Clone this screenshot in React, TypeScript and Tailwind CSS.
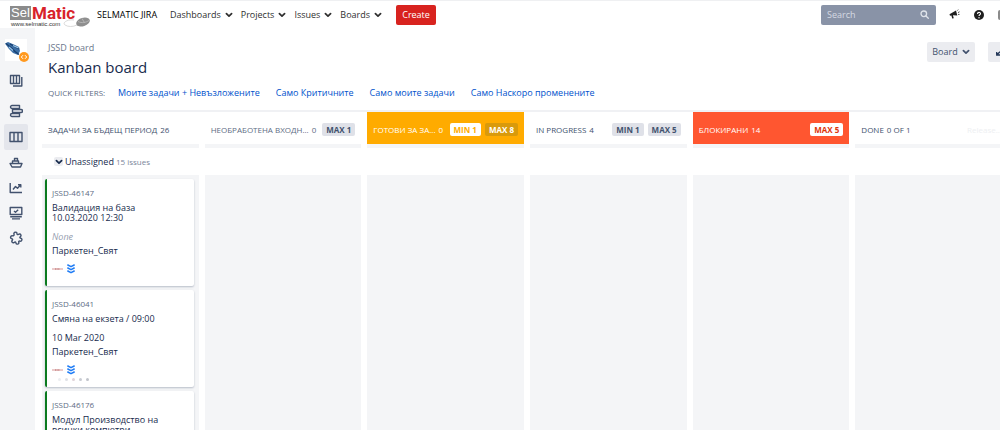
import React from "react";

function Chevron({ className = "" }: { className?: string }) {
  return (
    <svg className={"h-2 w-2 shrink-0 " + className} viewBox="0 0 8 8" fill="none" stroke="currentColor" strokeWidth="1.7" strokeLinecap="round" strokeLinejoin="round" aria-hidden="true">
      <path d="M1.4 2.6 4 5.2 6.6 2.6" />
    </svg>
  );
}

function Logo() {
  return (
    <span className="flex items-end pt-1">
      <span className="flex flex-col">
        <span className="flex h-[14px] items-center">
          <span className="flex h-[14px] w-[21px] items-center justify-center bg-[#8b8b8b] font-['Liberation_Sans',sans-serif] text-[13px] leading-[14px] text-white">Sel</span>
          <span className="ml-px font-['Roboto',sans-serif] text-[17px] leading-[14px] font-bold text-[#d8232a]">Matic</span>
        </span>
        <span className="pl-px font-['Liberation_Sans',sans-serif] text-[6px] leading-[8px] text-[#333]">www.selmatic.com</span>
      </span>
      <svg className="-ml-3 h-3 w-7 shrink-0" viewBox="0 0 28 12" aria-hidden="true">
        <path d="M11 4C4 3-1 7 2 9s8 2 12 0" fill="none" stroke="#cfcfcf" strokeWidth="0.8" />
        <ellipse cx="20" cy="6" rx="7" ry="4.2" transform="rotate(-18 20 6)" fill="#8f8f8f" />
        <path d="M15 5.5c4 2 8 1 11-1M19 2.5l2.4 4" fill="none" stroke="#bdbdbd" strokeWidth="0.8" />
      </svg>
    </span>
  );
}

const menus = ["Dashboards", "Projects", "Issues", "Boards"];

function TopBar() {
  return (
    <header className="flex h-7 shrink-0 items-center border-t border-[#eff0f2] pl-[10px] text-[#2f2f2f]">
      <a href="#home" className="flex w-[87px] shrink-0" aria-label="SelMatic home">
        <Logo />
      </a>
      <span className="w-[60px] text-[9px] font-medium whitespace-nowrap text-black">SELMATIC JIRA</span>
      <nav className="ml-[13px] flex items-center gap-2">
        {menus.map((m) => (
          <button key={m} className="flex items-center gap-1 text-[9px]">
            {m}
            <Chevron />
          </button>
        ))}
      </nav>
      <button className="ml-[14px] h-5 w-10 rounded-[2px] bg-[#d8231f] text-[9px] text-white">Create</button>
      <label className="ml-auto flex h-5 w-[115px] items-center rounded-[2px] bg-[#8993a7] pr-[7px] pl-[6px] text-[#dfe3ea]">
        <input type="search" placeholder="Search" aria-label="Search" className="w-full min-w-0 bg-transparent text-[9px] outline-none placeholder:text-[#d5dae3]" />
        <svg className="h-[9px] w-[9px] shrink-0" viewBox="0 0 9 9" fill="none" stroke="currentColor" strokeWidth="1.3" strokeLinecap="round" aria-hidden="true">
          <circle cx="3.8" cy="3.8" r="2.8" />
          <path d="m6 6 2.3 2.3" />
        </svg>
      </label>
      <button className="ml-[13px]" aria-label="Feedback">
        <svg className="h-[11px] w-[11px]" viewBox="0 0 11 11" fill="#1f1f1f" aria-hidden="true">
          <path d="M.5 5.2 7 1.6l1.3 4.8-4.4-.1.9 2.9-1.6.4-.8-3.2-1.4.3z" />
          <path d="M8.3 1.6 9.2.6M9 3.6l1.5-.8M9 5.4h1.5" stroke="#1f1f1f" strokeWidth="0.8" />
        </svg>
      </button>
      <button className="ml-[14px]" aria-label="Help">
        <svg className="h-[10px] w-[10px]" viewBox="0 0 10 10" aria-hidden="true">
          <circle cx="5" cy="5" r="5" fill="#1f1f1f" />
          <path d="M3.5 3.9c0-2 3-2 3-.2C6.5 4.9 5 4.7 5 6" fill="none" stroke="#fff" strokeWidth="1.1" />
          <circle cx="5" cy="7.7" r=".7" fill="#fff" />
        </svg>
      </button>
      <span className="ml-[14px] h-[10px] w-[2px] shrink-0 rounded-l-full bg-[#8b8b8b]" />
    </header>
  );
}

const railIcons = [
  {
    label: "Boards",
    box: "h-[25px]",
    d: <path d="M1.5 2.5h9v8h-9zM4.5 2.5v8M7.5 2.5v8M12.8 4v9H4" />,
  },
  {
    label: "Backlog",
    box: "mt-[6px] h-[25px]",
    d: <path d="M3 1.5h7.5v3H3a1.5 1.5 0 0 1 0-3zM3.5 5.500h8.5a1.500 1.500 0 0 1 0 3H3.500zM3 9.500h7.500v3H3a1.500 1.500 0 0 1 0-3z" />,
  },
  {
    label: "Kanban board",
    box: "mt-px h-[26px] bg-[#e4e6ec]",
    d: <path d="M1 2.500h12v9H1zM5 2.500v9M9 2.500v9" />,
  },
  {
    label: "Releases",
    box: "h-[25px]",
    d: <path d="M5.500 5V2.500h3V5M3.500 7.500V5h6v2.500M1 7.500h12l-1.500 3.500H3z" />,
  },
  {
    label: "Reports",
    box: "h-[25px]",
    d: <path d="M1.200 2v9.500H13M4 8.500l2.500-3 2 1.800L11.500 4M9 3.700h2.800v2.800" />,
  },
  {
    label: "Issues",
    box: "h-[25px]",
    d: <path d="M1.200 1.500h11.600v7H1.200zM5 5l1.500 1.300L9.200 3.800M1.200 10.700h11.600M3 12.900h8" />,
  },
  {
    label: "Components",
    box: "h-[26px]",
    d: <path d="M5 3.200c-.8-2.300 3-2.900 3-.5 0 1 .8 1.200 1.500.6 2-1.300 3.300 1.300 1.800 2.400-.8.700-.4 1.300.5 1.500 2 .7 1 3.400-.8 2.900-1-.3-1.500.3-1.200 1.200.5 2.200-2.600 2.400-2.900.5-.2-.9-.9-1-1.600-.4-1.700 1.200-3.200-.8-2-2.200.6-.7.300-1.300-.6-1.500-1.900-.6-1.200-3.200.7-2.900 1.100.2 1.900-.5 1.600-1.600z" />,
  },
];

function Rail() {
  return (
    <aside className="flex w-[35px] shrink-0 flex-col items-center bg-[#f4f5f7] pt-[11px] pr-[3px]">
      <a href="#project" className="relative block h-[22px] w-[22px] bg-white" aria-label="Project">
        <svg className="h-[22px] w-[22px]" viewBox="0 0 22 22" aria-hidden="true">
          <path d="M0 4.500 3 3l7 3 4 2 1 4-2 4-5-2-4-4z" fill="#3b6ea5" />
          <path d="M1 4.500l6 5 3 3 4 3M5 5l9 5" stroke="#173f70" strokeWidth="1.300" fill="none" />
          <path d="M8 6.500l5.500 2.500M4 8l4 3.500" stroke="#9cc8ea" strokeWidth="1.100" fill="none" />
        </svg>
        <svg className="absolute -right-[2px] -bottom-[1px] h-[10px] w-[10px]" viewBox="0 0 10 10" aria-hidden="true">
          <circle cx="5" cy="5" r="5" fill="#ff991f" />
          <path d="M4 3.200 2.300 5 4 6.800M6 3.200 7.700 5 6 6.800" fill="none" stroke="#fff" strokeWidth="1" />
        </svg>
      </a>
      <nav className="flex flex-col items-center pt-[6px]">
        {railIcons.map((i) => (
          <a key={i.label} href="#nav" aria-label={i.label} className={"flex w-6 items-center justify-center rounded-[2px] text-[#42526e] " + i.box}>
            <svg className="h-[14px] w-[14px]" viewBox="0 0 14 14" fill="none" stroke="currentColor" strokeWidth="1.4" strokeLinejoin="round" aria-hidden="true">
              {i.d}
            </svg>
          </a>
        ))}
      </nav>
    </aside>
  );
}

const filters = ["Моите задачи + Невъзложените", "Само Критичните", "Само моите задачи", "Само Наскоро променените"];

type Column = { name: string; count: string; head: string; badges: { text: string; style: string }[]; release?: boolean };

const grey = "bg-[#dfe1e8] text-[#42526e]";
const columns: Column[] = [
  { name: "ЗАДАЧИ ЗА БЪДЕЩ ПЕРИОД", count: "26", head: "text-[#42526e]", badges: [] },
  { name: "НЕОБРАБОТЕНА ВХОДН...", count: "0", head: "text-[#5e6c84]", badges: [{ text: "MAX 1", style: grey }] },
  {
    name: "ГОТОВИ ЗА ЗА...",
    count: "0",
    head: "bg-[#ffab00] text-white",
    badges: [
      { text: "MIN 1", style: "bg-white text-[#ffab00]" },
      { text: "MAX 8", style: "bg-[#d99a0b] text-white" },
    ],
  },
  { name: "IN PROGRESS", count: "4", head: "text-[#42526e]", badges: [{ text: "MIN 1", style: grey }, { text: "MAX 5", style: grey }] },
  { name: "БЛОКИРАНИ", count: "14", head: "bg-[#ff5630] text-white", badges: [{ text: "MAX 5", style: "bg-white text-[#de350b]" }] },
  { name: "DONE", count: "0 OF 1", head: "text-[#42526e]", badges: [], release: true },
];

function ColumnHead({ c }: { c: Column }) {
  return (
    <div className="min-w-0 border-b-4 border-[#f4f5f7]">
      <div className={"flex h-8 items-center gap-[3px] px-[6px] pt-[3px] text-[8px] whitespace-nowrap " + c.head}>
        <h2>{c.name}</h2>
        <span>{c.count}</span>
        <span className="ml-auto flex shrink-0 gap-1">
          {c.badges.map((b) => (
            <span key={b.text} className={"flex h-[13px] items-center rounded-[2px] px-1 text-[8px] font-bold " + b.style}>{b.text}</span>
          ))}
        </span>
        {c.release && <a href="#release" className="mr-1 text-[8px] text-[#eeeff2]">Release...</a>}
      </div>
    </div>
  );
}

type Issue = { id: string; title: string; note: string; empty?: boolean; dots?: boolean };

const issues: Issue[] = [
  { id: "JSSD-46147", title: "Валидация на база 10.03.2020 12:30", note: "None", empty: true },
  { id: "JSSD-46041", title: "Смяна на екзета / 09:00", note: "10 Mar 2020", dots: true },
  { id: "JSSD-46176", title: "Модул Производство на всички компютри -", note: "None", empty: true },
];

function Card({ issue }: { issue: Issue }) {
  return (
    <article className="rounded-[2px] border-l-2 border-[#0b7a1f] bg-white pt-[9px] pl-[5px] text-[9px] text-[#172b4d] shadow-[0_1px_2px_rgba(9,30,66,0.25)]">
      <a href="#issue" className="block text-[8px] leading-[10px] text-[#5e6c84]">{issue.id}</a>
      <p className="mt-[5px] w-28 leading-[10px]">{issue.title}</p>
      <p className={"mt-[7px] leading-[14px] " + (issue.empty ? "text-[#97a0af] italic" : "")}>{issue.note}</p>
      <p className="leading-[14px]">Паркетен_Свят</p>
      <div className="mt-[6px] flex h-[10px] items-center gap-1">
        <svg className="h-[10px] w-[11px]" viewBox="0 0 11 10" aria-hidden="true">
          <path d="M0 5h11" stroke="#e3b5b5" strokeWidth="1.4" />
          <path d="M3 5h5" stroke="#c98a8a" strokeWidth="1.4" strokeDasharray="1 .6" />
        </svg>
        <svg className="h-[10px] w-2" viewBox="0 0 8 10" fill="none" stroke="#1f7cf5" strokeWidth="1.5" strokeLinecap="round" strokeLinejoin="round" aria-hidden="true">
          <path d="M.8 1 4 2.700 7.200 1M.8 4 4 5.700 7.200 4M.8 7 4 8.700 7.200 7" />
        </svg>
      </div>
      {issue.dots ? (
        <div className="flex h-3 items-center gap-1 pb-1 pl-[6px]">
          <span className="h-[3px] w-[3px] rounded-full bg-[#eceef1]" />
          <span className="h-[3px] w-[3px] rounded-full bg-[#dfe1e6]" />
          <span className="h-[3px] w-[3px] rounded-full bg-[#dfd3d8]" />
          <span className="h-[3px] w-[3px] rounded-full bg-[#c9ccd3]" />
          <span className="h-[3px] w-[3px] rounded-full bg-[#c1c4cb]" />
        </div>
      ) : (
        <div className="h-3" />
      )}
    </article>
  );
}

export default function App() {
  return (
    <div className="flex h-screen flex-col overflow-hidden bg-white font-['Open_Sans','Noto_Sans',sans-serif]">
      <TopBar />
      <div className="flex min-h-0 flex-1">
        <Rail />
        <main className="flex min-w-0 flex-1 flex-col overflow-hidden">
          <div className="flex h-[82px] shrink-0 flex-col pl-[13px]">
            <div className="flex justify-between pt-[14px]">
              <div>
                <a href="#board" className="block text-[9px] leading-3 text-[#6b778c]">JSSD board</a>
                <h1 className="mt-[3px] text-[15px] leading-5 text-[#172b4d]">Kanban board</h1>
              </div>
              <div className="flex h-5 gap-[13px] text-[#42526e]">
                <button className="flex w-12 items-center justify-center gap-1 rounded-[2px] bg-[#ebecf0] text-[9px]">
                  Board
                  <Chevron />
                </button>
                <button className="flex w-3 items-center justify-end overflow-hidden rounded-l-[2px] bg-[#ebecf0]" aria-label="Full screen">
                  <svg className="h-2 w-1" viewBox="0 0 4 8" fill="none" stroke="#253858" strokeWidth="1.3" aria-hidden="true">
                    <path d="M.7 4v3H4M.7 7 4 3.800" />
                  </svg>
                </button>
              </div>
            </div>
            <div className="mt-[10px] flex items-center text-[9px] leading-3 text-[#0052cc]">
              <span className="w-[70px] text-[8px] text-[#5e6c84]">QUICK FILTERS:</span>
              <div className="flex gap-4">
                {filters.map((f) => (
                  <button key={f} className="whitespace-nowrap">{f}</button>
                ))}
              </div>
            </div>
          </div>
          <div className="-mr-3 flex min-h-0 flex-1 flex-col border-t-2 border-[#f0f1f4] pl-[7px]">
            <div className="grid grid-cols-6 gap-[6px]">
              {columns.map((c) => (
                <ColumnHead key={c.name} c={c} />
              ))}
            </div>
            <div className="flex h-[27px] shrink-0 items-center gap-[2px] pl-3 text-[9px] text-[#172b4d]">
              <button className="flex h-[9px] w-[9px] items-center justify-center rounded-[2px] bg-[#ebecf0]" aria-label="Collapse Unassigned">
                <Chevron />
              </button>
              <span>Unassigned</span>
              <span className="text-[8px] text-[#7a869a]">15 issues</span>
            </div>
            <div className="grid min-h-0 flex-1 grid-cols-6 gap-[6px]">
              {columns.map((c, i) => (
                <section key={c.name} aria-label={c.name} className="flex min-h-0 flex-col gap-1 overflow-hidden bg-[#f4f5f7] pt-1 pr-[5px] pl-[3px]">
                  {i === 0 && issues.map((issue) => <div key={issue.id} className="shrink-0"><Card issue={issue} /></div>)}
                </section>
              ))}
            </div>
          </div>
        </main>
      </div>
    </div>
  );
}
